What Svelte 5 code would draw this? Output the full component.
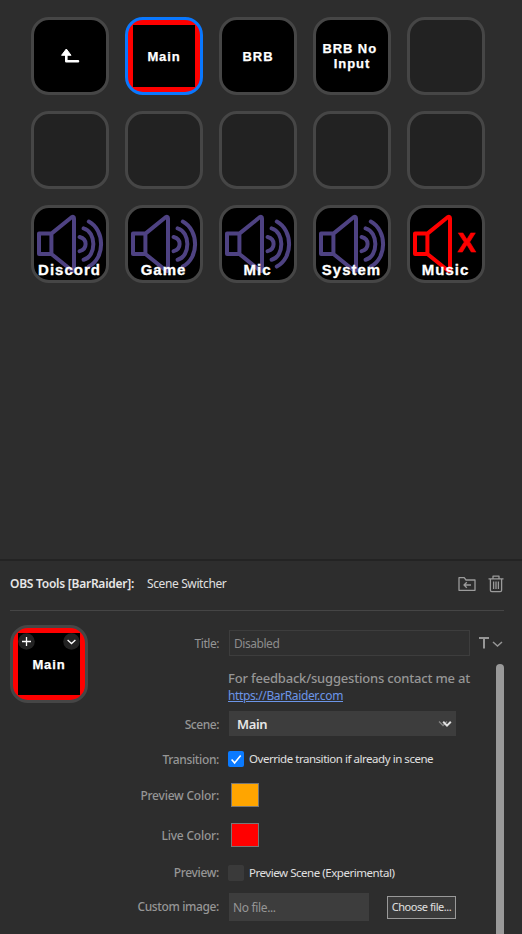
<script>
  const keys = [
    { kind: 'back' },
    { kind: 'scene', title: 'Main', active: true },
    { kind: 'scene', title: 'BRB' },
    { kind: 'scene', title: 'BRB No \nInput' },
    { kind: 'empty' },
    { kind: 'empty' },
    { kind: 'empty' },
    { kind: 'empty' },
    { kind: 'empty' },
    { kind: 'empty' },
    { kind: 'audio', title: 'Discord' },
    { kind: 'audio', title: 'Game' },
    { kind: 'audio', title: 'Mic' },
    { kind: 'audio', title: 'System' },
    { kind: 'audio', title: 'Music', muted: true }
  ];
  let override = $state(true);
  let previewScene = $state(false);
</script>

{#snippet speaker(muted)}
  <svg class="speaker" class:muted viewBox="0 0 72 72" width="72" height="72">
    <path d="M5 25.6H17.4V46H5ZM17.4 25.6L37.6 9.3Q40 8 40 10.6V61.4Q40 64 37.6 62.3L17.4 46" />
    {#if muted}
      <text x="47.5" y="44.3">X</text>
    {:else}
      <path d="M45.6 29Q51.6 30.5 51.6 36T45.6 43.2M49.6 20.4C62.6 24 62.6 48.2 49.6 51.8M54.8 13.6C71.2 22.5 71.2 50 54.8 58.6" />
    {/if}
  </svg>
{/snippet}

{#snippet check(on)}
  <span class="box" class:on>
    {#if on}
      <svg viewBox="0 0 16 16" width="16" height="16"><path d="M3.6 8.5L6.6 11.9L12.7 4.6" /></svg>
    {/if}
  </span>
{/snippet}

<div class="app">
  <section class="deck">
    {#each keys as key}
      <div class="key {key.kind}" class:active={key.active}>
        {#if key.kind === 'back'}
          <svg class="back-icon" viewBox="0 0 20 16" width="20" height="16">
            <path d="M6.3 5V13.2H18" />
            <path class="head" d="M1.8 7L6.3 1L10.8 7Z" />
          </svg>
        {:else if key.kind === 'audio'}
          {@render speaker(key.muted)}
          <span class="caption">{key.title}</span>
        {:else if key.title}
          <span class="name">{key.title}</span>
        {/if}
      </div>
    {/each}
  </section>

  <section class="inspector">
    <header>
      <strong>OBS Tools [BarRaider]:</strong>
      <span class="action">Scene Switcher</span>
      <svg class="folder" viewBox="0 0 18 16" width="18" height="16">
        <path d="M1 14V1.7H6.2L8 4H17V14.3H1Z" />
        <path d="M13 9H6M8.8 6.2L6 9L8.8 11.8" />
      </svg>
      <svg class="trash" viewBox="0 0 16 18" width="16" height="18">
        <path d="M.5 3.8H15.5M5 3.5V1.2H11V3.5M2.4 4V15.2Q2.4 16.6 3.8 16.6H12.2Q13.6 16.6 13.6 15.2V4M5.6 6.5V14M8 6.5V14M10.4 6.5V14" />
      </svg>
    </header>

    <div class="content">
      <div class="key scene active preview">
        <span class="name">Main</span>
        <svg class="badge left" viewBox="0 0 17 17" width="17" height="17">
          <circle cx="8.5" cy="8.5" r="8.3" /><path d="M4 8.5H13M8.5 4V13" />
        </svg>
        <svg class="badge right" viewBox="0 0 17 17" width="17" height="17">
          <circle cx="8.5" cy="8.5" r="8.3" /><path d="M4.6 7L8.5 10.6L12.4 7" />
        </svg>
      </div>

      <div class="form">
        <div class="row title-row">
          <span class="label l-title">Title:</span>
          <div class="title-input"><span>Disabled</span></div>
          <svg class="type" viewBox="0 0 26 14" width="26" height="14">
            <path class="tee" d="M1 2H11M6 2V12.5" />
            <path d="M15 6L19.5 10L24 6" />
          </svg>
        </div>

        <div class="scroller">
          <div class="fields">
            <div class="contact">
              <p>For feedback/suggestions contact me at</p>
              <a href="https://BarRaider.com">https://BarRaider.com</a>
            </div>
            <div class="row scene-row">
              <span class="label l-scene">Scene:</span>
              <div class="select">
                <span>Main</span>
                <svg viewBox="0 0 14 8" width="14" height="8">
                  <path class="dim" d="M1 1.5L5 5.5L9 1.5" />
                  <path d="M5.2 1.8L9 5.6L12.8 1.8" />
                </svg>
              </div>
            </div>
            <div class="row transition-row">
              <span class="label l-transition">Transition:</span>
              <button class="check" onclick={() => (override = !override)}>
                {@render check(override)}<span class="o-text">Override transition if already in scene</span>
              </button>
            </div>
            <div class="row color-row">
              <span class="label l-pcolor">Preview Color:</span>
              <span class="swatch orange"></span>
            </div>
            <div class="row live-row">
              <span class="label l-live">Live Color:</span>
              <span class="swatch red"></span>
            </div>
            <div class="row preview-row">
              <span class="label l-preview">Preview:</span>
              <button class="check" onclick={() => (previewScene = !previewScene)}>
                {@render check(previewScene)}<span class="p-text">Preview Scene (Experimental)</span>
              </button>
            </div>
            <div class="row file-row">
              <span class="label l-image">Custom image:</span>
              <div class="file">No file...</div>
              <button class="choose"><span>Choose file...</span></button>
            </div>
          </div>
          <div class="scrollbar"></div>
        </div>
      </div>
    </div>
  </section>
</div>

<style>
  :global(body) { margin: 0; background: #2d2d2d; }
  .app {
    width: 522px; height: 934px; overflow: hidden; box-sizing: border-box;
    display: flex; flex-direction: column; background: #2d2d2d; color: #e0e0e0;
    font-family: "Noto Sans", "Open Sans", sans-serif; font-size: 12px;
  }
  .app :global(*) { box-sizing: border-box; }
  svg { display: block; fill: none; flex: none; }
  button { font: inherit; color: inherit; background: none; border: 0; padding: 0; margin: 0; }
  span, strong { white-space: nowrap; }

  .deck {
    height: 559px; flex: none; padding: 17px 0 0 31px;
    display: grid; grid-template-columns: repeat(5, 78px); grid-auto-rows: 78px; gap: 16px;
  }
  .key {
    width: 78px; height: 78px; border: 3px solid #464646; border-radius: 18px;
    background: #000; overflow: hidden; position: relative; flex: none;
    display: flex; align-items: center; justify-content: center;
    font-family: "Liberation Sans", Arial, sans-serif; font-weight: bold; color: #fff;
  }
  .key.empty { background: #222; }
  .key.active { background: linear-gradient(#000, #000) center / 62px 62px no-repeat, #f00; border-color: #0a78ff; }
  .key.preview { border-color: #464646; }
  .name { font-size: 13px; line-height: 15px; letter-spacing: .9px; white-space: pre; text-align: center; -webkit-text-stroke: .25px #fff; }
  .back-icon path { stroke: #fff; stroke-width: 2.6; stroke-linejoin: round; stroke-linecap: round; }
  .back-icon .head { fill: #fff; stroke-width: 1; }
  .speaker { color: #4e4282; }
  .speaker.muted { color: #f00; }
  .speaker path { stroke: currentColor; stroke-width: 4; stroke-linejoin: round; stroke-linecap: round; }
  .speaker text { fill: currentColor; stroke: currentColor; stroke-width: .7; font-size: 27px; }
  .caption {
    position: absolute; left: 0; right: 1px; bottom: 2px; text-align: center;
    font-size: 15px; line-height: 17px; letter-spacing: 1px; -webkit-text-stroke: .3px #fff;
  }

  .inspector { flex: 1; min-height: 0; border-top: 2px solid #232323; padding: 0 18px 0 10px; display: flex; flex-direction: column; }
  header { height: 50px; flex: none; display: flex; align-items: center; border-bottom: 1px solid #454545; padding-bottom: 4px; }
  header strong { width: 137px; font-weight: 600; letter-spacing: -.25px; color: #e6e6e6; }
  .action { flex: 1; letter-spacing: -.38px; }
  header svg { stroke: #9b9b9b; stroke-width: 1.3; stroke-linejoin: round; }
  .folder { margin-right: 12px; }

  .content { flex: 1; min-height: 0; display: flex; }
  .preview { margin-top: 14px; }
  .badge { position: absolute; top: 5px; }
  .badge.left { left: 5px; }
  .badge.right { right: 5px; }
  .badge circle { fill: #222; }
  .badge path { stroke: #fff; stroke-width: 1.3; }

  .form { flex: 1; display: flex; flex-direction: column; min-height: 0; }
  .row { display: flex; align-items: center; }
  .label { width: 131px; margin-right: 10px; text-align: right; color: #969696; font-weight: 500; flex: none; }
  .l-title, .l-scene { letter-spacing: -.45px; }
  .l-transition, .l-preview { letter-spacing: -.35px; }
  .l-pcolor, .l-live { letter-spacing: -.22px; }
  .l-image { letter-spacing: -.38px; }
  .l-scene { padding-top: 2px; }
  .l-preview, .l-image { padding-bottom: 2px; }
  .title-row { height: 44px; flex: none; margin-top: 9px; padding-top: 10px; align-items: flex-start; }
  .title-row .label { line-height: 28px; font-weight: 400; }
  .title-input { width: 241px; height: 26px; border: 1px solid #3d3d3d; background: #2f2f2f; color: #8c8c8c; padding-left: 4px; line-height: 26px; letter-spacing: -.45px; }
  .type { margin: 6px 0 0 8px; stroke: #969696; stroke-width: 1.5; }
  .type .tee { stroke-width: 2; }
  .scroller { flex: 1; min-height: 0; display: flex; justify-content: space-between; }
  .fields { flex: 1; }
  .scrollbar { width: 8px; background: #999; border-radius: 4px 4px 0 0; }
  .contact { height: 42px; margin-left: 140px; padding-top: 5px; }
  .contact p { margin: 0; font-size: 13px; line-height: 18px; letter-spacing: -.19px; color: #969696; font-weight: 500; white-space: nowrap; }
  .contact a { display: block; line-height: 17px; letter-spacing: -.37px; color: #6c95e8; white-space: nowrap; }
  .scene-row { height: 35px; }
  .select { width: 227px; height: 25px; background: #3d3d3d; padding: 0 4px 0 8px; display: flex; align-items: center; justify-content: space-between; color: #e6e6e6; font-weight: 600; font-size: 13px; letter-spacing: -.4px; }
  .select svg { stroke: #e0e0e0; stroke-width: 2; }
  .select .dim { stroke: #858585; stroke-width: 1.3; }
  .transition-row { height: 36px; }
  .check { display: flex; align-items: center; gap: 5px; margin-left: -1px; }
  .box { width: 16px; height: 16px; border-radius: 2px; background: #3a3a3a; }
  .box.on { background: #0a7aff; }
  .box path { stroke: #fff; stroke-width: 1.6; }
  .o-text, .p-text { font-size: 11.5px; letter-spacing: -.46px; padding-bottom: 2px; }
  .color-row { height: 36px; }
  .live-row { height: 44px; }
  .swatch { width: 28px; height: 24px; margin-left: 2px; border: 1px solid #777; }
  .orange { background: #ffa500; }
  .red { background: #f00; }
  .preview-row { height: 32px; }
  .file-row { height: 36px; }
  .file { width: 140px; height: 28px; background: #3d3d3d; color: #969696; padding-left: 4px; line-height: 29px; letter-spacing: -.35px; }
  .choose { width: 69px; height: 23px; margin-left: 18px; border: 1px solid #999; background: #3a3a3a; font-size: 11px; letter-spacing: -.45px; padding-bottom: 1px; display: flex; align-items: center; justify-content: center; }
</style>
